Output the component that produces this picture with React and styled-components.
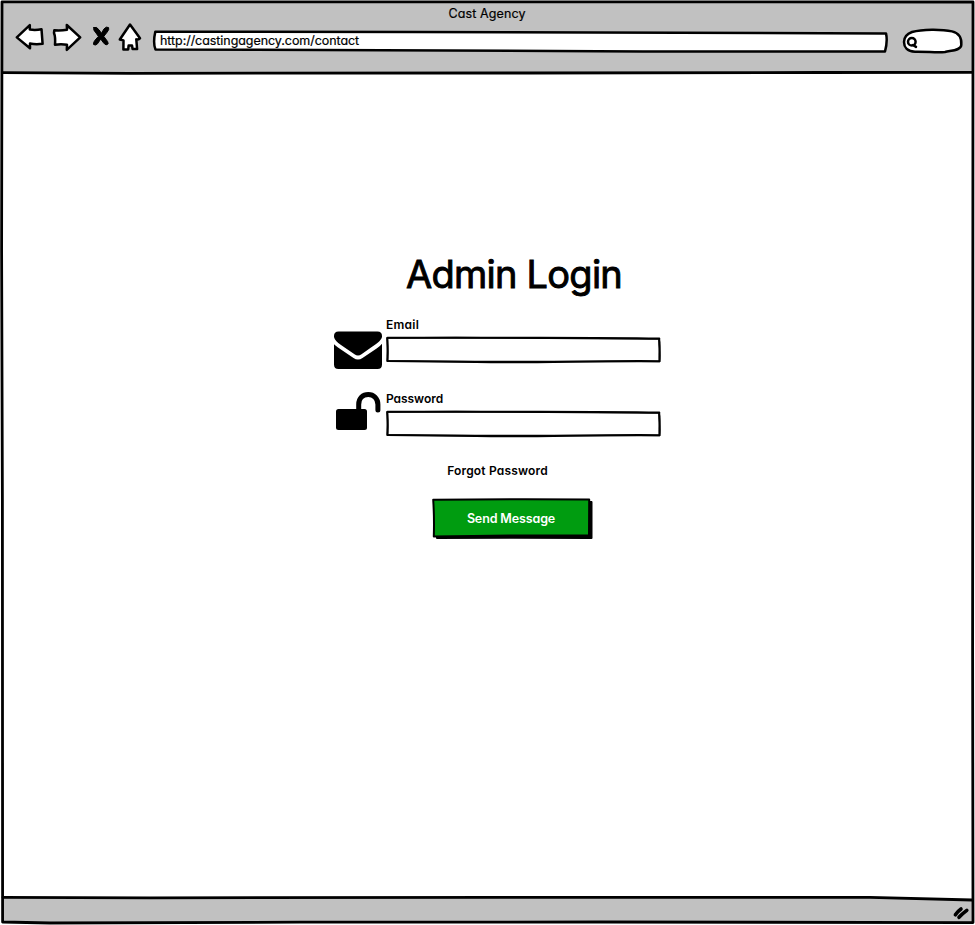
import React from "react";
import styled, { createGlobalStyle } from "styled-components";

const GlobalStyle = createGlobalStyle`
  * { box-sizing: border-box; }
  body { margin: 0; background: #fff; }
`;

const ink = "#000";
const chrome = "#c1c1c1";

const Window = styled.div`
  position: relative;
  display: flex;
  flex-direction: column;
  width: 975px;
  height: 925px;
  padding: 2px 2px 3px;
  overflow: hidden;
  color: ${ink};
  font-family: Inter, "Open Sans", sans-serif;
  font-feature-settings: "cv11" 1;
  font-size: 13px;
  line-height: 16px;
`;

const Header = styled.header`
  display: flex;
  flex-direction: column;
  height: 71px;
  padding: 4px 10px 0 12px;
  background: ${chrome};
`;

const WindowTitle = styled.div`
  align-self: center;
  height: 15px;
  margin-right: 3px;
  white-space: nowrap;
  font-size: 12.5px;
  letter-spacing: 0.12px;
  -webkit-text-stroke: 0.2px ${ink};
`;

const Toolbar = styled.div`
  display: flex;
  align-items: flex-start;
`;

const IconButton = styled.button`
  display: block;
  width: ${(p) => p.$width}px;
  height: 30px;
  margin: 1px ${(p) => p.$gap}px 0 0;
  padding: 0;
  border: 0;
  background: none;
`;

const Drawing = styled.svg`
  display: block;
  overflow: visible;
  fill: ${(p) => p.$fill || "none"};
  stroke: ${ink};
  stroke-width: ${(p) => p.$stroke || 2.5};
  stroke-linecap: round;
  stroke-linejoin: round;
`;

const Outline = styled(Drawing)`
  position: absolute;
  inset: 0;
  pointer-events: none;
`;

const AddressBar = styled.div`
  position: relative;
  width: 735px;
  height: 23px;
  margin-top: 9px;
`;

const Address = styled.div`
  position: relative;
  padding: 3px 0 0 7px;
  white-space: nowrap;
  font-size: 12.5px;
  letter-spacing: -0.06px;
  -webkit-text-stroke: 0.2px ${ink};
`;

const Search = styled.div`
  width: 61px;
  height: 25px;
  margin: 7px 0 0 14px;
`;

const Page = styled.main`
  flex: 1;
  display: flex;
  flex-direction: column;
  align-items: flex-start;
  padding: 180px 0 0 332px;
`;

const Form = styled.form`
  display: flex;
  flex-direction: column;
  align-items: center;
  width: 327px;
`;

const Heading = styled.h1`
  margin: 0 0 21px 33px;
  height: 43px;
  white-space: nowrap;
  font-size: 38px;
  line-height: 43px;
  font-weight: 400;
  letter-spacing: -0.75px;
  -webkit-text-stroke: 0.9px ${ink};
  stroke-linejoin: round;
`;

const FieldRow = styled.div`
  display: grid;
  grid-template-columns: 48px 275px;
  column-gap: 4px;
  width: 327px;
  height: 74px;
`;

const FieldIcon = styled.div`
  padding-top: ${(p) => p.$top}px;
`;

const Label = styled.label`
  display: block;
  height: 19px;
  font-size: 12px;
  font-weight: 600;
  letter-spacing: ${(p) => p.$spacing}px;
`;

const InputBox = styled.div`
  position: relative;
  width: 275px;
  height: 27px;
`;

const Input = styled.input`
  display: block;
  width: 100%;
  height: 100%;
  padding: 0 8px;
  border: 0;
  outline: 0;
  background: transparent;
  font: inherit;
`;

const ForgotLink = styled.a`
  height: 16px;
  margin: -2px 0 19px;
  font-size: 12px;
  font-weight: 600;
  letter-spacing: 0.17px;
  white-space: nowrap;
`;

const SubmitButton = styled.button`
  position: relative;
  width: 161px;
  height: 42px;
  margin-left: 29px;
  padding: 0 2px 1px 0;
  border: 0;
  background: none;
  color: #fff;
  font: inherit;
  font-feature-settings: inherit;
  font-size: 12.5px;
  font-weight: 600;
  letter-spacing: -0.13px;
`;

const ButtonText = styled.span`
  position: relative;
  white-space: nowrap;
`;

const Footer = styled.footer`
  display: flex;
  justify-content: flex-end;
  height: 25px;
  padding: 8px 4px 0 0;
  background: ${chrome};
  clip-path: polygon(0 0, 91% 0, 100% 3px, 100% 100%, 0 100%);
`;

function Field({ id, label, spacing, iconTop, icon, type }) {
  return (
    <FieldRow>
      <FieldIcon $top={iconTop}>{icon}</FieldIcon>
      <div>
        <Label htmlFor={id} $spacing={spacing}>{label}</Label>
        <InputBox>
          <Outline width="275" height="27" $stroke={2}>
            <path d="M1.5 1.7 C80 2.4 190 .7 273.3 2.6 C272.6 9 274.6 17 273.5 25.2 C200 24.6 160 27 90 26 L1.3 25 C2.6 16 .8 9 1.5 1.7Z" />
            <path d="M1 2 L70 1.6 L273 3 C275 9 272.4 18 273.6 25.5 C190 25.2 90 26.1 1.6 24.8 C.7 17 2.8 10 1 2Z" strokeWidth="1.6" />
          </Outline>
          <Input id={id} type={type} />
        </InputBox>
      </div>
    </FieldRow>
  );
}

const EnvelopeIcon = () => (
  <Drawing width="48" height="38" $fill={ink} $stroke={0.01}>
    <path d="M4.5 .5H43.5Q48 .5 48 5V6C47 10 42 13 37 16.5L27.5 23.3Q24 25.7 20.5 23.3L7 14C3 11 .5 9 0 6V5Q0 .5 4.5 .5Z" />
    <path d="M0 13.3Q1.5 14.8 4 16.5L19.5 27Q24 30 28.5 27L43 17.2Q46.5 14.8 48 12.8V33.5Q48 38 43.5 38H4.5Q0 38 0 33.5Z" />
  </Drawing>
);

const UnlockIcon = () => (
  <Drawing width="48" height="40" $fill="none" $stroke={5}>
    <path d="M24.7 18V12.5C24.7 6 29 2.5 34.3 2.5S43.9 6.5 43.9 12.5V18" />
    <rect x="2" y="17" width="31" height="21" rx="2.5" fill={ink} stroke="none" />
  </Drawing>
);

export default function App() {
  return (
    <>
      <GlobalStyle />
      <Window>
        <Header>
          <WindowTitle>Cast Agency</WindowTitle>
          <Toolbar>
            <IconButton $width={30} $gap={7} aria-label="Back">
              <Drawing width="30" height="30" $fill="#fff">
                <path d="M2.8 15.4 L15.8 3.2 V7.6 Q22 8.4 27.5 7.2 L28.6 21.8 Q22 22.6 16 21.6 V26.2Z" />
              </Drawing>
            </IconButton>
            <IconButton $width={30} $gap={11} aria-label="Forward">
              <Drawing width="30" height="30" $fill="#fff">
                <path d="M3.3 8.3 Q10 8.8 16 7.8 L15.8 3 L29.2 15.4 L15.8 27.8 L16 22.8 Q10 21.8 4 22.8 Q4.6 15 3 11Z" />
              </Drawing>
            </IconButton>
            <IconButton $width={18} $gap={7} aria-label="Stop">
              <Drawing width="18" height="30" $fill={ink} $stroke={1}>
                <path d="M1.8 5.5 Q4.4 4 7.2 8 L9.4 11.3 L12 6.9 Q14.5 4 16.6 5.6 Q17.5 7.2 15.2 10.1 L11.8 14.4 L15.6 19.5 Q17 22 15 22.8 Q13 23.2 11 20.2 L8.7 17 L5.5 21.8 Q3.2 24 1.5 22.4 Q1 20.4 3.2 18 L6.4 14.4 L4 11 Q.8 8 1.8 5.5Z" />
              </Drawing>
            </IconButton>
            <IconButton $width={24} $gap={12} aria-label="Home">
              <Drawing width="24" height="30" $fill="#fff">
                <path d="M13 2.5 L23 16.3 Q21 18 19.3 17.3 L20.1 27 H15.6 L15 23.5 H11.6 L11.2 27.5 H6.4 L6.5 18.4 L2.8 17.5Z" />
              </Drawing>
            </IconButton>
            <AddressBar>
              <Outline width="735" height="23" $fill="#fff">
                <path d="M2.3 1.8 L260 1.9 L733 3.4 Q734.8 11 732 21.5 Q620 21.8 490 21.4 L2.5 19.4 Q-.2 13 2.3 1.8Z" />
              </Outline>
              <Address>http://castingagency.com/contact</Address>
            </AddressBar>
            <Search>
              <Drawing width="61" height="25" $fill="#fff">
                <path d="M10 4 C20 1 40 1 50 3.4 C57 5 59.8 10 59.3 17 C59 22.4 50 22.4 43 24 C34 25 26 23.4 13 23.7 C5 23.5 2 19 2 14 C2 9 6 5.5 10 4Z" />
                <circle cx="9.8" cy="13.7" r="3.8" />
                <path d="M11 17 L14 18.9" />
              </Drawing>
            </Search>
          </Toolbar>
        </Header>
        <Page>
          <Form onSubmit={(e) => e.preventDefault()}>
            <Heading>Admin Login</Heading>
            <Field id="email" label="Email" type="email" spacing={0.25} iconTop={14} icon={<EnvelopeIcon />} />
            <Field id="password" label="Password" type="password" spacing={-0.05} iconTop={1} icon={<UnlockIcon />} />
            <ForgotLink>Forgot Password</ForgotLink>
            <SubmitButton type="submit">
              <Outline width="161" height="42" $fill={ink} $stroke={2}>
                <path d="M5 5 L159.5 4 L159.5 40 Q80 39.6 5 40Z" />
                <path d="M1.2 1.8 Q80 .8 157.2 1.5 L157 37.5 Q90 37 1.8 38.6 Q2.4 20 1.2 1.8Z" fill="#009c10" />
              </Outline>
              <ButtonText>Send Message</ButtonText>
            </SubmitButton>
          </Form>
        </Page>
        <Footer>
          <Drawing width="16" height="14" $stroke={3.6}>
            <path d="M2.4 9.8 Q4.5 6.5 8 4 M6 12.3 Q9 9 13.8 5.4" />
          </Drawing>
        </Footer>
        <Outline width="975" height="925" $stroke={2.8}>
          <path d="M2 1.8 L973 2 L972.6 650 L973 922.6 L600 922 L300 922.2 L50 923 L2.6 922 L2.4 500 L1.6 250Z" />
          <path d="M3 72.6 L130 73.3 L530 73 L820 72.5 L972 72.4" />
          <path d="M3 897.3 L150 897.8 L500 897.4 L870 897.3 L972 900" />
        </Outline>
      </Window>
    </>
  );
}
